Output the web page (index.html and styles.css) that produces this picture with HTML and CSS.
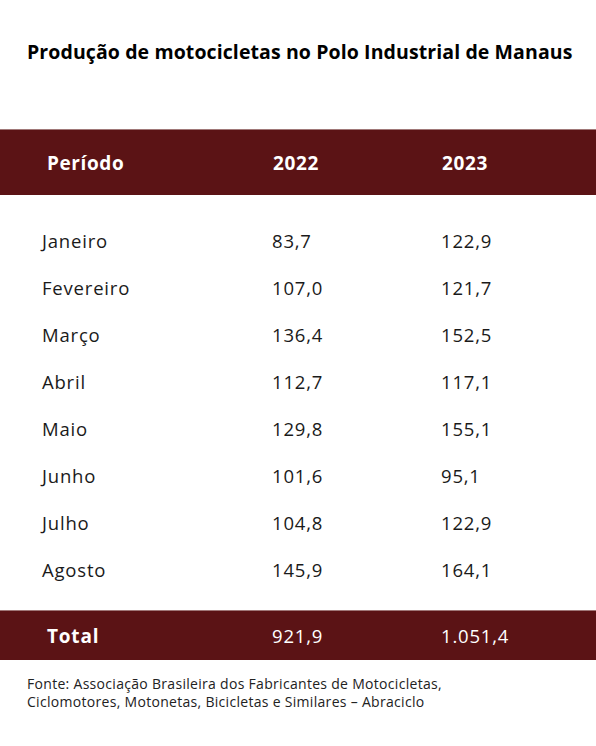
FILE: index.html
```html
<!DOCTYPE html>
<html lang="pt-BR">
<head>
<meta charset="utf-8">
<link rel="stylesheet" href="styles.css">
</head>
<body>
<h1 class="title">Produção de motocicletas no Polo Industrial de Manaus</h1>
<div class="table">
  <div class="row head">
    <span class="c1">Período</span><span class="c2">2022</span><span class="c3">2023</span>
  </div>
  <div class="rows">
    <div class="row"><span class="c1">Janeiro</span><span class="c2">83,7</span><span class="c3">122,9</span></div>
    <div class="row"><span class="c1">Fevereiro</span><span class="c2">107,0</span><span class="c3">121,7</span></div>
    <div class="row"><span class="c1">Março</span><span class="c2">136,4</span><span class="c3">152,5</span></div>
    <div class="row"><span class="c1">Abril</span><span class="c2">112,7</span><span class="c3">117,1</span></div>
    <div class="row"><span class="c1">Maio</span><span class="c2">129,8</span><span class="c3">155,1</span></div>
    <div class="row"><span class="c1">Junho</span><span class="c2">101,6</span><span class="c3">95,1</span></div>
    <div class="row"><span class="c1">Julho</span><span class="c2">104,8</span><span class="c3">122,9</span></div>
    <div class="row"><span class="c1">Agosto</span><span class="c2">145,9</span><span class="c3">164,1</span></div>
  </div>
  <div class="row total">
    <span class="c1">Total</span><span class="c2">921,9</span><span class="c3">1.051,4</span>
  </div>
</div>
<p class="source">Fonte: Associação Brasileira dos Fabricantes de Motocicletas,<br>Ciclomotores, Motonetas, Bicicletas e Similares – Abraciclo</p>
</body>
</html>
```
FILE: styles.css
```css
html, body {
  margin: 0;
  padding: 0;
  background: #fff;
  color: #111;
  font-family: "Open Sans", "Noto Sans", sans-serif;
}
body {
  width: 596px;
  height: 746px;
  overflow: hidden;
}
.title {
  margin: 0;
  padding: 40px 0 0 27px;
  height: 129px;
  box-sizing: border-box;
  font-size: 19.5px;
  font-weight: 700;
  line-height: 24px;
  letter-spacing: 0.1px;
  color: #000;
}
.table {
  display: flex;
  flex-direction: column;
}
.row {
  display: grid;
  grid-template-columns: 230px 169px 1fr;
  align-items: center;
  font-size: 18.5px;
  letter-spacing: 0.8px;
}
.head {
  height: 66px;
  background: #5b1315;
  border-top: 1px solid #a07878;
  color: #fff;
  font-weight: 700;
  font-size: 19px;
  letter-spacing: 0.6px;
  padding-left: 47px;
  box-sizing: border-box;
  grid-template-columns: 226px 169px 1fr;
}
.rows {
  padding: 22px 0 17px 0;
  display: flex;
  flex-direction: column;
}
.rows .row {
  height: 47px;
  padding-left: 42px;
  color: #1a1a1a;
}
.total {
  height: 50px;
  background: #5b1315;
  border-top: 1px solid #a07878;
  color: #fff;
  padding-left: 47px;
  box-sizing: border-box;
  grid-template-columns: 225px 169px 1fr;
}
.total .c1 {
  font-weight: 700;
  font-size: 19px;
}
.source {
  margin: 15px 0 0 27px;
  font-size: 14px;
  line-height: 17.5px;
  letter-spacing: 0.3px;
  color: #222;
}
```
